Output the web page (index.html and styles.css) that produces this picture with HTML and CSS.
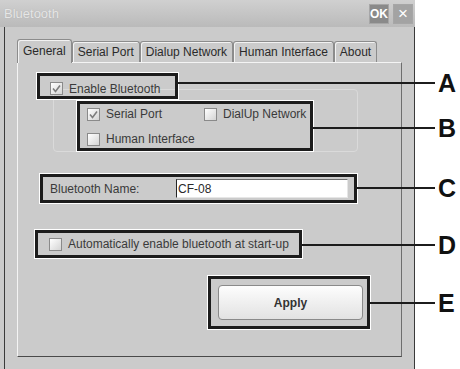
FILE: index.html
```html
<!DOCTYPE html>
<html lang="en">
  <head>
    <meta charset="UTF-8" />
    <meta name="viewport" content="width=device-width, initial-scale=1.0" />
    <title>Bluetooth</title>
    <link rel="stylesheet" href="styles.css">
  </head>
  <body>
    <div class="window">
      <div class="titlebar">
        <span class="title">Bluetooth</span>
        <div class="title-buttons">
          <span class="btn-ok">OK</span>
          <span class="btn-close">&times;</span>
        </div>
      </div>
      <div class="frame">
        <div class="tabs">
          <div class="tab active">General</div>
          <div class="tab">Serial Port</div>
          <div class="tab">Dialup Network</div>
          <div class="tab">Human Interface</div>
          <div class="tab">About</div>
        </div>
        <div class="panel">
          <div class="callout callout-a">
            <label class="check">
              <span class="box"><svg width="11" height="11" viewBox="0 0 11 11"><path d="M2 5.5 L4.5 8.5 L9 2.5" fill="none" stroke="#7d7d7d" stroke-width="1.6"/></svg></span>
              Enable Bluetooth
            </label>
            <span class="tag">A</span>
          </div>
          <div class="group">
            <div class="callout callout-b">
              <div class="services">
                <label class="check">
                  <span class="box"><svg width="11" height="11" viewBox="0 0 11 11"><path d="M2 5.5 L4.5 8.5 L9 2.5" fill="none" stroke="#7d7d7d" stroke-width="1.6"/></svg></span>
                  Serial Port
                </label>
                <label class="check"><span class="box"></span>DialUp Network</label>
                <label class="check"><span class="box"></span>Human Interface</label>
              </div>
              <span class="tag">B</span>
            </div>
          </div>
          <div class="callout callout-c">
            <span class="name-label">Bluetooth Name:</span>
            <input type="text" class="name-input" value="CF-08" />
            <span class="tag">C</span>
          </div>
          <div class="callout callout-d">
            <label class="check"><span class="box"></span>Automatically enable bluetooth at start-up</label>
            <span class="tag">D</span>
          </div>
          <div class="callout callout-e">
            <button class="apply">Apply</button>
            <span class="tag">E</span>
          </div>
        </div>
      </div>
    </div>
  </body>
</html>
```
FILE: styles.css
```css
body {
  margin: 0;
  background-color: #fff;
  font-family: "Liberation Sans", Arial, sans-serif;
  font-size: 12px;
  color: #3a3a3a;
}
.window {
  width: 415px;
  height: 369px;
  background-color: #cbcbcb;
}
.titlebar {
  height: 27px;
  box-sizing: border-box;
  padding: 0 2px 0 4px;
  display: flex;
  align-items: center;
  justify-content: space-between;
  background: linear-gradient(#d0d0d0, #bababa);
}
.title {
  font-size: 13px;
  color: #e6e6e6;
  text-shadow: 0 0 1px #a8a8a8;
}
.title-buttons {
  display: flex;
  gap: 4px;
}
.btn-ok,
.btn-close {
  width: 20px;
  height: 20px;
  box-sizing: border-box;
  border: 1px solid #a6a6a6;
  display: flex;
  align-items: center;
  justify-content: center;
  color: #fff;
}
.btn-ok {
  background-color: #8a8a8a;
  font-weight: bold;
  font-size: 12px;
}
.btn-close {
  background-color: #a3a3a3;
  font-size: 17px;
}
.frame {
  margin-left: 4px;
  height: 342px;
  box-sizing: border-box;
  border-left: 1px solid #3a3a3a;
  border-right: 1px solid #3a3a3a;
  padding: 12px 0 0 12px;
}
.tabs {
  display: flex;
  align-items: flex-end;
  height: 23px;
}
.tab {
  height: 21px;
  box-sizing: border-box;
  padding: 0 5px;
  border: 1px solid #8c8c8c;
  border-bottom: 0;
  border-radius: 3px 3px 0 0;
  box-shadow: inset 1px 1px 0 #f2f2f2;
  display: flex;
  align-items: center;
  color: #2a2a2a;
}
.tab.active {
  height: 24px;
  margin-bottom: -1px;
  padding-bottom: 2px;
  position: relative;
  z-index: 1;
  background-color: #cbcbcb;
}
.panel {
  width: 385px;
  height: 295px;
  box-sizing: border-box;
  border: 1px solid;
  border-color: #f4f4f4 #6e6e6e #4a4a4a #f4f4f4;
  display: flow-root;
}
.callout {
  position: relative;
  box-sizing: border-box;
  border: 3px solid #1c1c1c;
  box-shadow: 0 0 0 1px #fff;
  display: flex;
  align-items: center;
}
.callout::after {
  content: '';
  position: absolute;
  left: calc(100% + 3px);
  top: var(--line-top);
  width: var(--line-w);
  height: 2px;
  background-color: #1c1c1c;
}
.tag {
  position: absolute;
  left: calc(100% + 6px + var(--line-w));
  top: calc(var(--line-top) - 11px);
  font: bold 25px/24px "Liberation Sans", Arial, sans-serif;
  color: #111;
}
.check {
  display: flex;
  align-items: center;
  gap: 6px;
  line-height: 14px;
  white-space: nowrap;
}
.box {
  width: 13px;
  height: 13px;
  box-sizing: border-box;
  border: 1px solid #8a8a8a;
  background: linear-gradient(135deg, #ffffff, #d4d4d4);
  display: flex;
  align-items: center;
  justify-content: center;
}
.callout-a {
  margin: 10px 0 0 19px;
  width: 141px;
  height: 26px;
  padding: 5px 0 0 10px;
  z-index: 1;
  --line-top: 6px;
  --line-w: 257px;
}
.group {
  margin: -10px 0 0 35px;
  width: 305px;
  height: 63px;
  box-sizing: border-box;
  border: 1px solid #dadada;
  border-radius: 4px;
  display: flow-root;
}
.callout-b {
  margin: 11px 0 0 23px;
  width: 236px;
  height: 50px;
  padding: 3px 0 0 7px;
  align-items: flex-start;
  --line-top: 23px;
  --line-w: 122px;
}
.services {
  display: grid;
  grid-template-columns: 117px auto;
  row-gap: 11px;
}
.callout-c {
  margin: 22px 0 0 22px;
  width: 317px;
  height: 29px;
  padding-left: 7px;
  --line-top: 10px;
  --line-w: 78px;
}
.name-label {
  width: 126px;
}
.name-input {
  width: 172px;
  height: 19px;
  box-sizing: border-box;
  margin: 0;
  padding: 0 0 0 1px;
  border: 1px solid;
  border-color: #6a6a6a #e6e6e6 #e6e6e6 #262626;
  background-color: #fff;
  font-family: "Liberation Sans", Arial, sans-serif;
  font-size: 12px;
  color: #2a2a2a;
  outline: none;
}
.callout-d {
  margin: 27px 0 0 17px;
  width: 267px;
  height: 28px;
  padding-left: 11px;
  --line-top: 11px;
  --line-w: 133px;
}
.callout-e {
  margin: 18px 0 0 190px;
  width: 162px;
  height: 53px;
  padding-left: 7px;
  --line-top: 23px;
  --line-w: 65px;
}
.apply {
  width: 145px;
  height: 35px;
  border: 1px solid #8a8a8a;
  border-radius: 4px;
  background: linear-gradient(#fdfdfd, #e2e2e2);
  font-family: "Liberation Sans", Arial, sans-serif;
  font-weight: bold;
  font-size: 12px;
  color: #333;
}
```
